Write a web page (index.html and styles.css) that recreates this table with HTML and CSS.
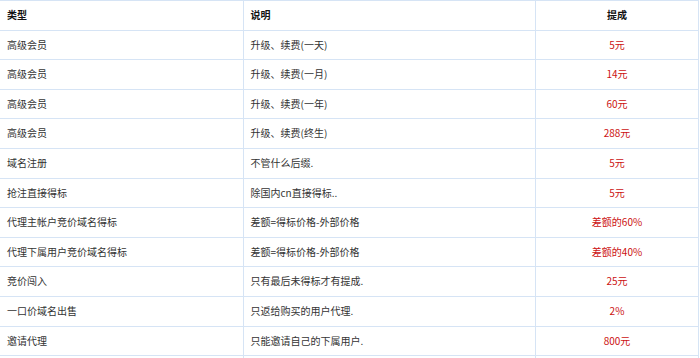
FILE: index.html
```html
<!DOCTYPE html>
<html lang="zh">
<head>
<meta charset="utf-8">
<link rel="stylesheet" href="styles.css">
</head>
<body>
<table class="comm">
  <colgroup>
    <col class="c-type">
    <col class="c-desc">
    <col class="c-amt">
  </colgroup>
  <thead>
    <tr><th>类型</th><th>说明</th><th class="amt">提成</th></tr>
  </thead>
  <tbody>
    <tr><td>高级会员</td><td>升级、续费(一天)</td><td class="amt red">5元</td></tr>
    <tr><td>高级会员</td><td>升级、续费(一月)</td><td class="amt red">14元</td></tr>
    <tr><td>高级会员</td><td>升级、续费(一年)</td><td class="amt red">60元</td></tr>
    <tr><td>高级会员</td><td>升级、续费(终生)</td><td class="amt red">288元</td></tr>
    <tr><td>域名注册</td><td>不管什么后缀.</td><td class="amt red">5元</td></tr>
    <tr><td>抢注直接得标</td><td>除国内cn直接得标..</td><td class="amt red">5元</td></tr>
    <tr><td>代理主帐户竞价域名得标</td><td>差额=得标价格-外部价格</td><td class="amt red">差额的60%</td></tr>
    <tr><td>代理下属用户竞价域名得标</td><td>差额=得标价格-外部价格</td><td class="amt red">差额的40%</td></tr>
    <tr><td>竞价闯入</td><td>只有最后未得标才有提成.</td><td class="amt red">25元</td></tr>
    <tr><td>一口价域名出售</td><td>只返给购买的用户代理.</td><td class="amt red">2%</td></tr>
    <tr><td>邀请代理</td><td>只能邀请自己的下属用户.</td><td class="amt red">800元</td></tr>
    <tr><td>&nbsp;</td><td>&nbsp;</td><td class="amt">&nbsp;</td></tr>
  </tbody>
</table>
</body>
</html>
```

FILE: styles.css
```css
html, body {
  margin: 0;
  padding: 0;
  background: #ffffff;
}

body {
  font-family: "Noto Sans CJK SC", "Noto Sans", sans-serif;
  font-size: 10px;
  color: #333333;
}

.comm {
  width: 698px;
  border-collapse: collapse;
  table-layout: fixed;
}

.c-type { width: 243px; }
.c-desc { width: 292px; }
.c-amt { width: 163px; }

.comm th,
.comm td {
  border: 1px solid #d6e4f5;
  padding: 7px 6px 7px 7px;
  line-height: 14.6px;
  text-align: left;
  white-space: nowrap;
  overflow: hidden;
}

.comm th:first-child,
.comm td:first-child {
  border-left: none;
}

.comm th {
  font-weight: bold;
  color: #111111;
}

.comm .amt {
  text-align: center;
}

.comm .red {
  color: #cc1111;
}
```
